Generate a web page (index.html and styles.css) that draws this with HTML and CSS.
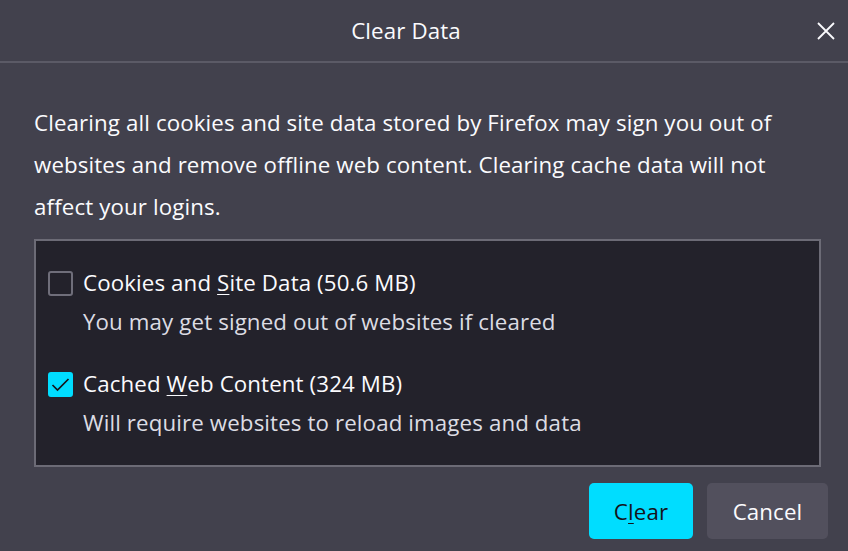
FILE: index.html
```html
<!DOCTYPE html>
<html>
<head>
<meta charset="utf-8">
<link rel="stylesheet" href="styles.css">
</head>
<body>
<div class="dialog">
  <div class="header">
    <span class="title">Clear Data</span>
    <button class="close" aria-label="Close">
      <svg width="20" height="20" viewBox="0 0 20 20"><path d="M2 2L18 18M18 2L2 18" stroke="#fbfbfe" stroke-width="1.8" fill="none"/></svg>
    </button>
  </div>
  <p class="desc">Clearing all cookies and site data stored by Firefox may sign you out of websites and remove offline web content. Clearing cache data will not affect your logins.</p>
  <div class="box">
    <div class="option">
      <div class="row">
        <span class="check"></span>
        <span class="label">Cookies and <u>S</u>ite Data (50.6 MB)</span>
      </div>
      <div class="sub">You may get signed out of websites if cleared</div>
    </div>
    <div class="option">
      <div class="row">
        <span class="check checked">
          <svg width="21" height="21" viewBox="0 0 21 21"><path d="M2.5 11L7.5 16L18.5 5" stroke="#15141a" stroke-width="1.7" fill="none"/></svg>
        </span>
        <span class="label">Cached <u>W</u>eb Content (324 MB)</span>
      </div>
      <div class="sub">Will require websites to reload images and data</div>
    </div>
  </div>
  <div class="buttons">
    <button class="btn primary">C<u>l</u>ear</button>
    <button class="btn secondary">Cancel</button>
  </div>
</div>
</body>
</html>
```
FILE: styles.css
```css
html, body {
  margin: 0;
  padding: 0;
  background: #42414d;
}
body {
  font-family: "Open Sans", "Noto Sans", sans-serif;
  color: #fbfbfe;
  font-size: 22.3px;
  letter-spacing: 0.12px;
}
.dialog {
  width: 848px;
  height: 551px;
  position: relative;
  display: flex;
  flex-direction: column;
}
.header {
  height: 63px;
  box-sizing: border-box;
  border-bottom: 2px solid #5b5a66;
  display: flex;
  align-items: center;
  justify-content: center;
  padding-right: 36px;
  position: relative;
}
.title {
  font-size: 22.3px;
  line-height: 30px;
}
.close {
  position: absolute;
  right: 12px;
  top: 21px;
  background: none;
  border: none;
  padding: 0;
  width: 20px;
  height: 20px;
}
.desc {
  margin: 39px 34px 0 34px;
  line-height: 42px;
}
.box {
  margin: 11px 27px 0 34px;
  height: 228px;
  box-sizing: border-box;
  border: 2px solid #6c6b76;
  background: #23222b;
  padding: 27px 0 0 12px;
}
.option {
  margin-bottom: 32px;
}
.row {
  display: flex;
  align-items: center;
  height: 30px;
}
.check {
  width: 21px;
  height: 21px;
  border: 2px solid #6f6e7a;
  border-radius: 3px;
  margin-right: 10px;
  display: flex;
  align-items: center;
  justify-content: center;
}
.check.checked {
  background: #00ddff;
  border-color: #00ddff;
}
.label {
  line-height: 30px;
}
.sub {
  margin-left: 35px;
  color: #dcdce3;
  line-height: 30px;
  margin-top: 9px;
}
u {
  text-decoration-thickness: 1px;
  text-underline-offset: 3px;
}
.buttons {
  display: flex;
  justify-content: flex-end;
  gap: 14px;
  margin: 16px 20px 0 0;
}
.btn {
  font-family: inherit;
  font-size: 22.3px;
  letter-spacing: 0.12px;
  height: 56px;
  border: none;
  border-radius: 5px;
  padding: 0;
}
.primary {
  width: 104px;
  background: #00ddff;
  color: #15141a;
}
.secondary {
  width: 121px;
  background: #52505d;
  color: #fbfbfe;
}
```
